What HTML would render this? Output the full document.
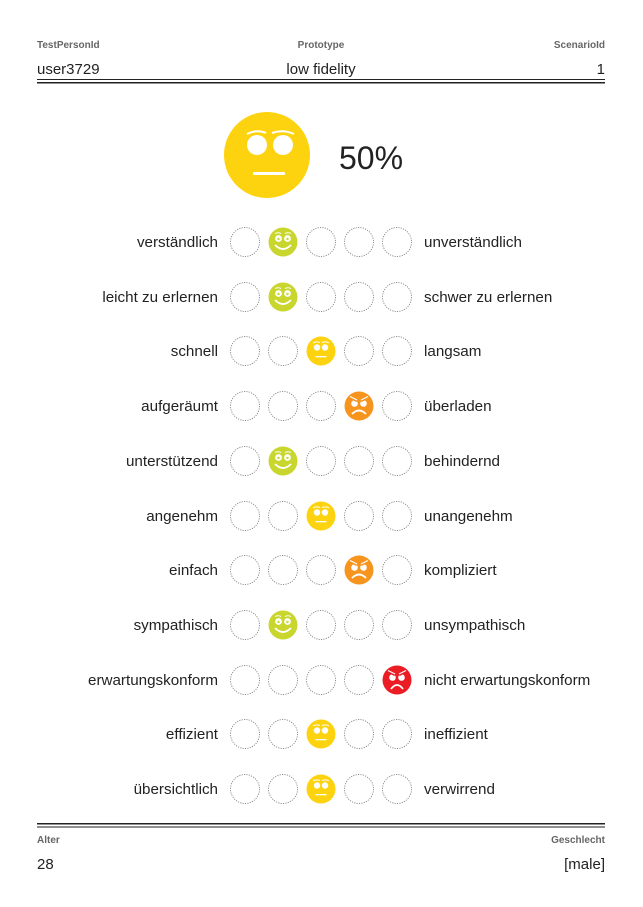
<!DOCTYPE html>
<html><head><meta charset="utf-8"><style>
html,body{margin:0;padding:0;background:#fff;}
svg{display:block;font-family:"Liberation Sans",sans-serif;}
</style></head><body>
<svg width="643" height="907" viewBox="0 0 643 907" xmlns="http://www.w3.org/2000/svg">
<defs>
<circle id="e" r="14.5" fill="none" stroke="#888" stroke-width="0.9" stroke-dasharray="1.2 1.2"/>
<g id="happy">
<circle r="14.5" fill="#c8d62e"/>
<circle cx="-4.5" cy="-3.5" r="3.4" fill="#fff"/><circle cx="4.5" cy="-3.5" r="3.4" fill="#fff"/>
<circle cx="-4.5" cy="-3" r="1.2" fill="#c8d62e"/><circle cx="4.5" cy="-3" r="1.2" fill="#c8d62e"/>
<path d="M-8 -8.5 Q-5 -10 -2 -8.5 M2 -8.5 Q5 -10 8 -8.5" stroke="#fff" stroke-width="1" fill="none"/>
<path d="M-8 3 Q0 11 8 3" stroke="#fff" stroke-width="1.8" fill="none"/>
</g>
<g id="neutral">
<circle r="14.5" fill="#fdd20e"/>
<circle cx="-4" cy="-3.5" r="3.2" fill="#fff"/><circle cx="4" cy="-3.5" r="3.2" fill="#fff"/>
<path d="M-8 -8 Q-5 -10 -1 -8.5 M1 -8.5 Q5 -10 8 -8" stroke="#fff" stroke-width="1" fill="none"/>
<rect x="-5.5" y="5" width="11" height="1.3" fill="#fff"/>
</g>
<g id="angry">
<circle r="14.5" fill="#f7941d"/>
<circle cx="-4.5" cy="-2.5" r="3.3" fill="#fff"/><circle cx="4.5" cy="-2.5" r="3.3" fill="#fff"/>
<path d="M-9 -9 L-2 -5 M9 -9 L2 -5" stroke="#f7941d" stroke-width="2.5"/>
<path d="M-9 -9.5 L-2 -6 M9 -9.5 L2 -6" stroke="#fff" stroke-width="1.2"/>
<path d="M-7 8 Q0 1 7 8" stroke="#fff" stroke-width="1.8" fill="none"/>
</g>
<g id="vangry">
<circle r="14.5" fill="#ec1c24"/>
<circle cx="-4.5" cy="-2.5" r="3.3" fill="#fff"/><circle cx="4.5" cy="-2.5" r="3.3" fill="#fff"/>
<path d="M-9 -9 L-2 -5 M9 -9 L2 -5" stroke="#ec1c24" stroke-width="2.5"/>
<path d="M-9 -9.5 L-2 -6 M9 -9.5 L2 -6" stroke="#fff" stroke-width="1.2"/>
<path d="M-6 9 Q0 1 6 9" stroke="#fff" stroke-width="1.8" fill="none"/>
</g>
</defs>

<g fill="#666" font-size="10" font-weight="bold">
<text x="37" y="48">TestPersonId</text>
<text x="321" y="48" text-anchor="middle">Prototype</text>
<text x="605" y="48" text-anchor="end">ScenarioId</text>
<text x="37" y="843">Alter</text>
<text x="605" y="843" text-anchor="end">Geschlecht</text>
</g>
<g fill="#222" font-size="15">
<text x="37" y="74">user3729</text>
<text x="321" y="74" text-anchor="middle">low fidelity</text>
<text x="605" y="74" text-anchor="end">1</text>
<text x="37" y="869">28</text>
<text x="605" y="869" text-anchor="end">[male]</text>
</g>
<rect x="37" y="79" width="568" height="1" fill="#222"/>
<rect x="37" y="82" width="568" height="1.5" fill="#222"/>
<rect x="37" y="823" width="568" height="1.5" fill="#222"/>
<rect x="37" y="826.5" width="568" height="1" fill="#222"/>

<g transform="translate(267,155)">
<circle r="43" fill="#fdd20e"/>
<circle cx="-10" cy="-10" r="10" fill="#fff"/><circle cx="16" cy="-10" r="10" fill="#fff"/>
<path d="M-20 -21 Q-10 -26 -1 -22 M5 -22 Q16 -26 27 -21" stroke="#fff" stroke-width="2" fill="none"/>
<rect x="-14" y="17" width="32" height="3" rx="1" fill="#fff"/>
</g>
<text x="339" y="169" font-size="32" fill="#222">50%</text>

<g font-size="15.2" fill="#222">
<text x="218" y="247" text-anchor="end">verständlich</text><text x="424" y="247">unverständlich</text>
<text x="218" y="302" text-anchor="end">leicht zu erlernen</text><text x="424" y="302">schwer zu erlernen</text>
<text x="218" y="356" text-anchor="end">schnell</text><text x="424" y="356">langsam</text>
<text x="218" y="411" text-anchor="end">aufgeräumt</text><text x="424" y="411">überladen</text>
<text x="218" y="466" text-anchor="end">unterstützend</text><text x="424" y="466">behindernd</text>
<text x="218" y="521" text-anchor="end">angenehm</text><text x="424" y="521">unangenehm</text>
<text x="218" y="575" text-anchor="end">einfach</text><text x="424" y="575">kompliziert</text>
<text x="218" y="630" text-anchor="end">sympathisch</text><text x="424" y="630">unsympathisch</text>
<text x="218" y="685" text-anchor="end">erwartungskonform</text><text x="424" y="685">nicht erwartungskonform</text>
<text x="218" y="739" text-anchor="end">effizient</text><text x="424" y="739">ineffizient</text>
<text x="218" y="794" text-anchor="end">übersichtlich</text><text x="424" y="794">verwirrend</text>
</g>

<g transform="translate(0,242)"><use href="#e" x="245"/><use href="#happy" x="283"/><use href="#e" x="321"/><use href="#e" x="359"/><use href="#e" x="397"/></g>
<g transform="translate(0,297)"><use href="#e" x="245"/><use href="#happy" x="283"/><use href="#e" x="321"/><use href="#e" x="359"/><use href="#e" x="397"/></g>
<g transform="translate(0,351)"><use href="#e" x="245"/><use href="#e" x="283"/><use href="#neutral" x="321"/><use href="#e" x="359"/><use href="#e" x="397"/></g>
<g transform="translate(0,406)"><use href="#e" x="245"/><use href="#e" x="283"/><use href="#e" x="321"/><use href="#angry" x="359"/><use href="#e" x="397"/></g>
<g transform="translate(0,461)"><use href="#e" x="245"/><use href="#happy" x="283"/><use href="#e" x="321"/><use href="#e" x="359"/><use href="#e" x="397"/></g>
<g transform="translate(0,516)"><use href="#e" x="245"/><use href="#e" x="283"/><use href="#neutral" x="321"/><use href="#e" x="359"/><use href="#e" x="397"/></g>
<g transform="translate(0,570)"><use href="#e" x="245"/><use href="#e" x="283"/><use href="#e" x="321"/><use href="#angry" x="359"/><use href="#e" x="397"/></g>
<g transform="translate(0,625)"><use href="#e" x="245"/><use href="#happy" x="283"/><use href="#e" x="321"/><use href="#e" x="359"/><use href="#e" x="397"/></g>
<g transform="translate(0,680)"><use href="#e" x="245"/><use href="#e" x="283"/><use href="#e" x="321"/><use href="#e" x="359"/><use href="#vangry" x="397"/></g>
<g transform="translate(0,734)"><use href="#e" x="245"/><use href="#e" x="283"/><use href="#neutral" x="321"/><use href="#e" x="359"/><use href="#e" x="397"/></g>
<g transform="translate(0,789)"><use href="#e" x="245"/><use href="#e" x="283"/><use href="#neutral" x="321"/><use href="#e" x="359"/><use href="#e" x="397"/></g>
</svg>
</body></html>
